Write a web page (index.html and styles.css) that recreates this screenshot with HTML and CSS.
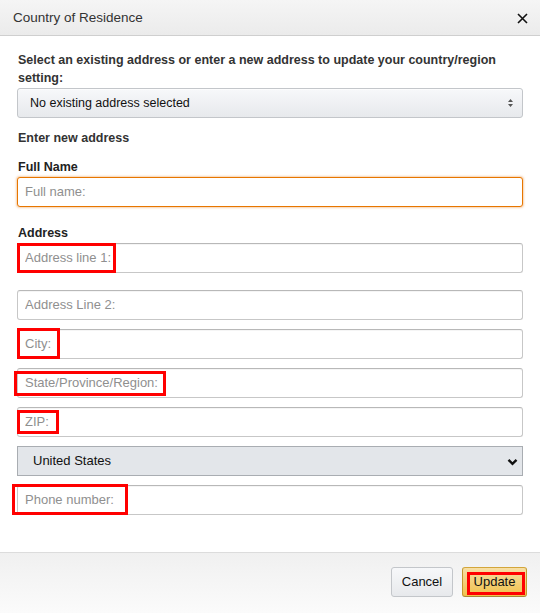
FILE: index.html
```html
<!DOCTYPE html>
<html lang="en">
<head>
<meta charset="utf-8">
<title>Country of Residence</title>
<link rel="stylesheet" href="styles.css">
</head>
<body>
<div class="dialog">
  <header class="dlg-head">
    <h1 class="dlg-title">Country of Residence</h1>
    <button class="close" aria-label="Close">
      <svg width="11" height="11" viewBox="0 0 11 11"><path d="M1 1L10 10M10 1L1 10" stroke="#111" stroke-width="1.6" fill="none"/></svg>
    </button>
  </header>
  <main class="dlg-body">
    <p class="lead">Select an existing address or enter a new address to update your country/region setting:</p>
    <div class="field">
      <select class="sel-existing"><option>No existing address selected</option></select>
      <svg class="updown" width="7" height="10" viewBox="0 0 7 10"><path d="M3.5 1L6 4H1Z M3.5 9L6 6H1Z" fill="#555"/></svg>
    </div>
    <h2 class="section">Enter new address</h2>
    <label class="label" for="fn">Full Name</label>
    <input id="fn" class="inp focus" placeholder="Full name:">
    <div class="label addr-label">Address</div>
    <div class="field">
      <input class="inp" placeholder="Address line 1:">
      <span class="mark m-addr1"></span>
    </div>
    <div class="field gap-big">
      <input class="inp" placeholder="Address Line 2:">
    </div>
    <div class="field gap">
      <input class="inp" placeholder="City:">
      <span class="mark m-city"></span>
    </div>
    <div class="field gap">
      <input class="inp" placeholder="State/Province/Region:">
      <span class="mark m-state"></span>
    </div>
    <div class="field gap">
      <input class="inp" placeholder="ZIP:">
      <span class="mark m-zip"></span>
    </div>
    <div class="field gap">
      <select class="sel-country"><option>United States</option></select>
      <svg class="chev" width="11" height="8" viewBox="0 0 11 8"><path d="M1.5 1.8L5.5 5.8L9.5 1.8" stroke="#111" stroke-width="2.4" fill="none"/></svg>
    </div>
    <div class="field gap">
      <input class="inp" placeholder="Phone number:">
      <span class="mark m-phone"></span>
    </div>
  </main>
  <footer class="dlg-foot">
    <button class="btn btn-cancel">Cancel</button>
    <div class="btn-wrap">
      <button class="btn btn-update">Update</button>
      <span class="mark m-update"></span>
    </div>
  </footer>
</div>
</body>
</html>
```
FILE: styles.css
```css
* { box-sizing: border-box; }
html, body { margin: 0; padding: 0; background: #fff; }
body {
  font-family: "Liberation Sans", Arial, sans-serif;
  font-size: 13px;
  color: #333;
  width: 540px;
  height: 613px;
  overflow: hidden;
}
.dialog { display: flex; flex-direction: column; height: 613px; }
.dlg-head {
  height: 36px;
  flex: none;
  display: flex;
  align-items: center;
  justify-content: space-between;
  padding: 0 12px 0 13px;
  background: linear-gradient(to bottom, #f5f5f5, #ebebeb);
  border-bottom: 1px solid #cfcfcf;
}
.dlg-title { margin: 0; font-size: 13.5px; font-weight: normal; color: #333; padding-bottom: 1px; }
.close { border: 0; background: none; padding: 0; width: 12px; height: 12px; display: flex; align-items: center; justify-content: center; margin-top: 1px; }
.dlg-body { flex: 1; padding: 15px 17px 0 17px; }
.lead { margin: 0 0 1px 1px; font-size: 12.5px; font-weight: bold; line-height: 18px; color: #333; }
.field { position: relative; }
.gap { margin-top: 9px; }
.gap-big { margin-top: 17px; }
select, input { font-family: inherit; font-size: 13px; margin: 0; }
.sel-existing {
  -webkit-appearance: none; appearance: none;
  width: 506px; height: 30px; display: block;
  border: 1px solid #c3c6ca;
  border-radius: 3px;
  background: linear-gradient(to bottom, #f7f8fa, #e7e9ec);
  padding: 0 0 1px 12px;
  font-size: 12.5px;
  color: #111;
  box-shadow: 0 1px 0 rgba(255,255,255,.6) inset;
}
.updown { position: absolute; right: 9px; top: 10px; }
.section { margin: 11px 0 0 1px; font-size: 12.5px; font-weight: bold; line-height: 18px; height: 18px; color: #333; }
.label { display: block; margin: 11px 0 1px 1px; font-size: 12.5px; font-weight: bold; line-height: 18px; color: #222; }
.addr-label { margin-top: 17px; margin-bottom: 1px; }
.inp {
  display: block;
  width: 506px; height: 30px;
  border: 1px solid #c7c7c7;
  border-top-color: #b8b8b8;
  border-radius: 3px;
  padding: 0 7px 1px 7px;
  color: #111;
  background: #fff;
  box-shadow: 0 1px 0 rgba(0,0,0,.04) inset;
  outline: none;
}
.inp::placeholder { color: #8f8f8f; opacity: 1; }
.inp.focus {
  border-color: #e77600;
  box-shadow: 0 0 2px 1px rgba(228,121,17,.35);
}
.sel-country {
  -webkit-appearance: none; appearance: none;
  width: 506px; height: 30px; display: block;
  border: 1px solid #a9adb2;
  border-radius: 0;
  background: #e3e6ea;
  padding: 0 0 1px 15px;
  color: #111;
}
.chev { position: absolute; right: 5px; top: 12px; }
.mark { position: absolute; border: 3px solid #f00; pointer-events: none; }
.m-addr1 { left: 0; top: 0; width: 99px; height: 30px; }
.m-city { left: 0; top: -1px; width: 43px; height: 31px; }
.m-state { left: -3px; top: 3px; width: 152px; height: 25px; }
.m-zip { left: 0; top: 3px; width: 42px; height: 24px; }
.m-phone { left: -5px; top: -1px; width: 116px; height: 31px; }
.m-update { left: 5px; top: 5px; width: 58px; height: 23px; }
.dlg-foot {
  flex: none;
  height: 61px;
  border-top: 1px solid #dcdcdc;
  background: linear-gradient(to bottom, #f0f0f0, #fbfbfb);
  display: flex;
  justify-content: flex-end;
  align-items: flex-start;
  gap: 9px;
  padding: 14px 13px 0 0;
}
.btn {
  font-family: inherit; font-size: 13px;
  height: 30px;
  border-radius: 3px;
  color: #111;
  padding: 0 0 1px 0;
  cursor: pointer;
}
.btn-cancel {
  width: 62px;
  border: 1px solid #c3c6ca;
  background: linear-gradient(to bottom, #f7f8fa, #e7e9ec);
}
.btn-wrap { position: relative; }
.btn-update {
  display: block;
  width: 65px;
  border: 1px solid #c89411;
  border-color: #d3a63b #c2992f #a88734;
  background: linear-gradient(to bottom, #f7dfa5, #f0c14b);
}
```
